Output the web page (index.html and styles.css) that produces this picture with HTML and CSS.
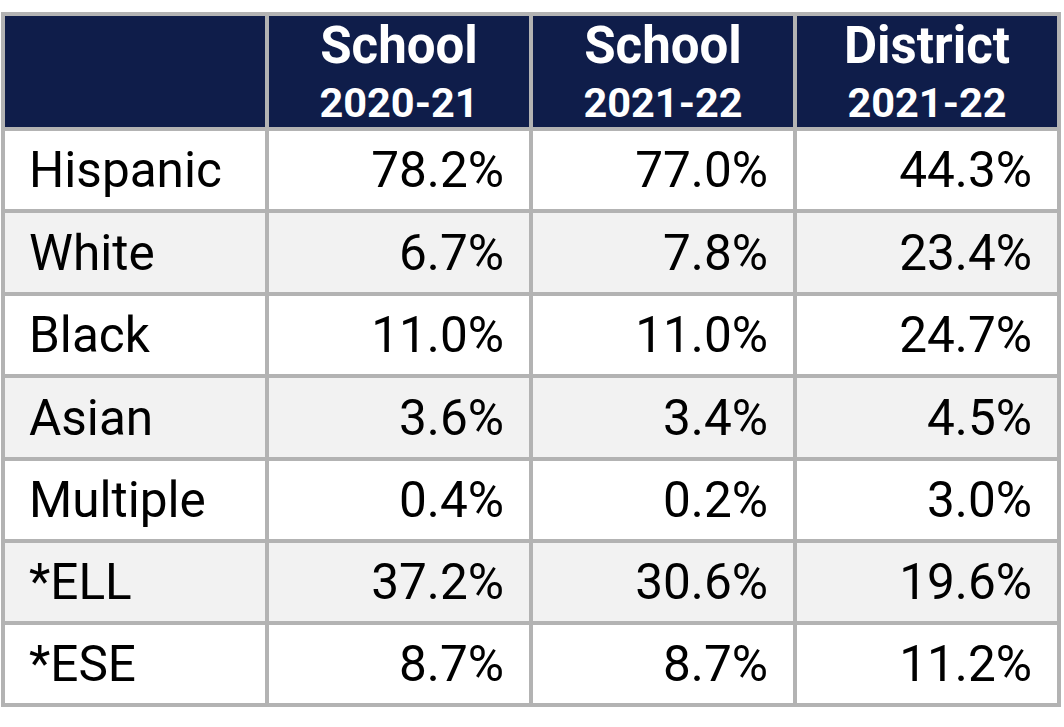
FILE: index.html
```html
<!DOCTYPE html>
<html lang="en">
<head>
<meta charset="utf-8">
<title>Demographics</title>
<link rel="stylesheet" href="styles.css">
</head>
<body>
<div class="table">
  <div class="cell head"></div>
  <div class="cell head"><span class="h1">School</span><span class="h2">2020-21</span></div>
  <div class="cell head"><span class="h1">School</span><span class="h2">2021-22</span></div>
  <div class="cell head"><span class="h1">District</span><span class="h2">2021-22</span></div>

  <div class="cell label">Hispanic</div><div class="cell num">78.2%</div><div class="cell num">77.0%</div><div class="cell num">44.3%</div>
  <div class="cell label alt">White</div><div class="cell num alt">6.7%</div><div class="cell num alt">7.8%</div><div class="cell num alt">23.4%</div>
  <div class="cell label">Black</div><div class="cell num">11.0%</div><div class="cell num">11.0%</div><div class="cell num">24.7%</div>
  <div class="cell label alt">Asian</div><div class="cell num alt">3.6%</div><div class="cell num alt">3.4%</div><div class="cell num alt">4.5%</div>
  <div class="cell label">Multiple</div><div class="cell num">0.4%</div><div class="cell num">0.2%</div><div class="cell num">3.0%</div>
  <div class="cell label alt">*ELL</div><div class="cell num alt">37.2%</div><div class="cell num alt">30.6%</div><div class="cell num alt">19.6%</div>
  <div class="cell label">*ESE</div><div class="cell num">8.7%</div><div class="cell num">8.7%</div><div class="cell num">11.2%</div>
</div>
</body>
</html>
```
FILE: styles.css
```css
html, body {
  margin: 0;
  padding: 0;
  background: #ffffff;
}
body {
  font-family: Roboto, "Liberation Sans", sans-serif;
  color: #000000;
}
.table {
  margin: 12px 0 0 1px;
  width: 1060px;
  box-sizing: border-box;
  display: grid;
  grid-template-columns: repeat(4, 260px);
  grid-template-rows: 111px 78px 79px 78px 79px 78px 78px 78px;
  gap: 4px;
  padding: 4px;
  background: #b3b3b3;
}
.cell {
  background: #ffffff;
  display: flex;
  align-items: center;
  font-size: 49.5px;
  padding: 0 25px 0 24px;
}
.cell.alt {
  background: #f2f2f2;
}
.label {
  justify-content: flex-start;
}
.num {
  justify-content: flex-end;
}
.head {
  background: #0f1d4a;
  color: #ffffff;
  flex-direction: column;
  justify-content: center;
  font-weight: 700;
  padding: 5px 0 0 0;
}
.h1 {
  font-size: 51px;
  line-height: 58px;
}
.h2 {
  font-size: 41.5px;
  line-height: 56px;
}
```
